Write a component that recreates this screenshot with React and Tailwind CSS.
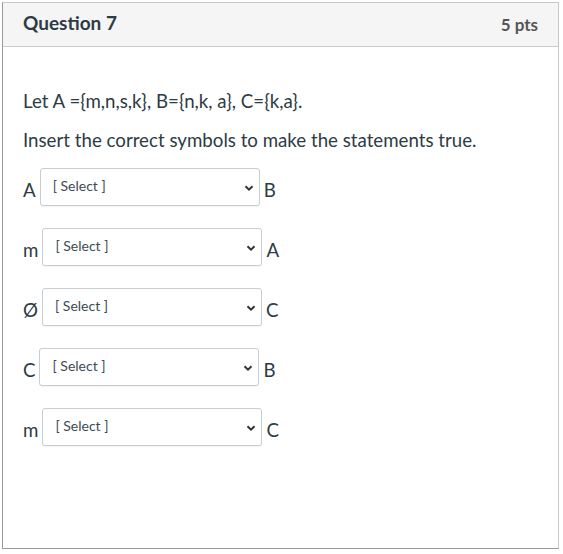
import React from 'react';

const rows = [
  { left: 'A', right: 'B' },
  { left: 'm', right: 'A' },
  { left: 'Ø', right: 'C' },
  { left: 'C', right: 'B' },
  { left: 'm', right: 'C' },
];

function FakeSelect() {
  return (
    <div className="w-[220px] h-[38px] flex items-start justify-between rounded-[3px] border border-[#c7cdd1] bg-white pl-[12px] pr-[5px] pt-[8px] shadow-[0_1px_1px_rgba(0,0,0,0.05)]">
      <span className="text-[14px] leading-[18px] text-[#3d4b55]">[ Select ]</span>
      <svg width="10" height="10" viewBox="0 0 10 10" className="mt-[6px]">
        <path d="M1.5 3.2 L5 6.6 L8.5 3.2" fill="none" stroke="#333" strokeWidth="2" />
      </svg>
    </div>
  );
}

export default function App() {
  return (
    <div className="w-[563px] h-[554px] bg-white pl-[2px] pt-[2px]" style={{ fontFamily: 'Lato, "Liberation Sans", sans-serif' }}>
      <div className="w-[557px] h-[547px] border border-[#9a9a9a] border-t-[#c8c8c8] border-r-[#c8c8c8] flex flex-col">
        <div className="h-[44px] bg-[#f5f5f5] border-b border-[#c7cdd1] flex items-center justify-between px-[20px]">
          <span className="text-[19px] font-bold text-[#2d3b45] -mt-[3px]">Question 7</span>
          <span className="text-[17px] font-bold text-[#555]">5 pts</span>
        </div>
        <div className="px-[20px] pt-[42px] text-[#2d3b45] text-[18.7px]">
          <p className="leading-[24px]">Let A ={'{'}m,n,s,k{'}'}, B={'{'}n,k, a{'}'}, C={'{'}k,a{'}'}.</p>
          <p className="leading-[24px] mt-[15px]">Insert the correct symbols to make the statements true.</p>
          <div className="mt-[16px] flex flex-col gap-[22px]">
            {rows.map((r, i) => (
              <div key={i} className="flex items-center gap-[4px] h-[38px]">
                <span className="pt-[6px]">{r.left}</span>
                <FakeSelect />
                <span className="pt-[6px]">{r.right}</span>
              </div>
            ))}
          </div>
        </div>
      </div>
    </div>
  );
}
